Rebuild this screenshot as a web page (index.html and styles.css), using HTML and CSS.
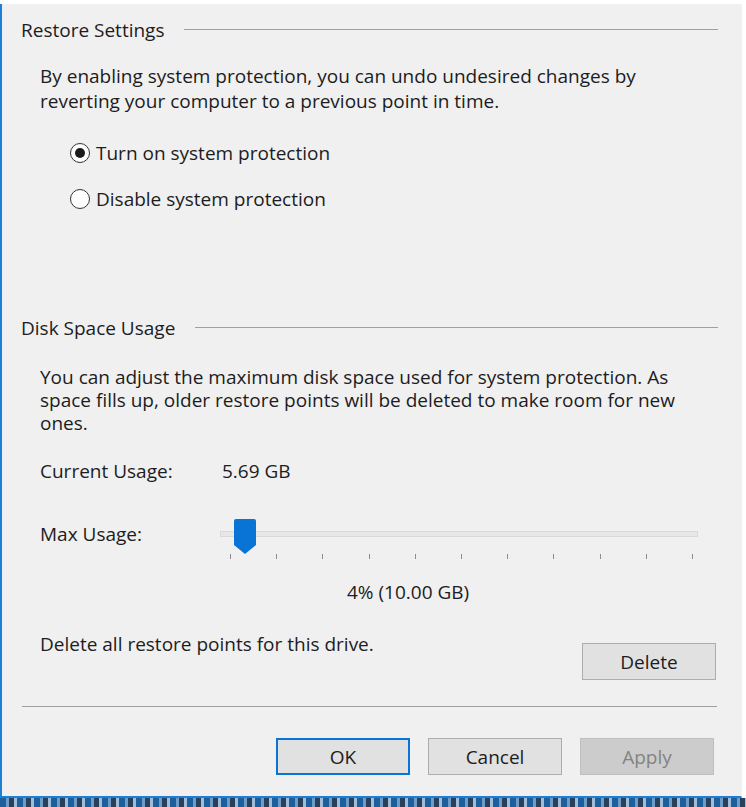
FILE: index.html
```html
<!DOCTYPE html>
<html lang="en">
<head>
    <meta charset="UTF-8">
    <title>System Protection</title>
    <link rel="stylesheet" href="styles.css">
</head>
<body>
    <div class="window">
        <div class="group">
            <div class="group-title"><span>Restore Settings</span></div>
            <p class="note">By enabling system protection, you can undo undesired changes by reverting your computer to a previous point in time.</p>
            <div class="radio-list">
                <label class="radio checked"><span class="dot"></span>Turn on system protection</label>
                <label class="radio"><span class="dot"></span>Disable system protection</label>
            </div>
        </div>

        <div class="group group-disk">
            <div class="group-title"><span>Disk Space Usage</span></div>
            <p class="note note-disk">You can adjust the maximum disk space used for system protection. As space fills up, older restore points will be deleted to make room for new ones.</p>
            <div class="field">
                <span class="field-label">Current Usage:</span>
                <span>5.69 GB</span>
            </div>
            <div class="field field-max">
                <span class="field-label">Max Usage:</span>
                <div class="slider">
                    <div class="track"></div>
                    <svg class="thumb" width="22" height="35" viewBox="0 0 22 35">
                        <path d="M2 0 H20 A2 2 0 0 1 22 2 V26 L11 35 L0 26 V2 A2 2 0 0 1 2 0 Z" fill="#0a74d6"/>
                    </svg>
                    <div class="ticks">
                        <i></i><i></i><i></i><i></i><i></i><i></i><i></i><i></i><i></i><i></i><i></i>
                    </div>
                </div>
            </div>
            <div class="percent">4% (10.00 GB)</div>
            <div class="delete-row">
                <span>Delete all restore points for this drive.</span>
                <button class="btn btn-delete">Delete</button>
            </div>
        </div>

        <hr class="divider">

        <div class="actions">
            <button class="btn btn-default">OK</button>
            <button class="btn">Cancel</button>
            <button class="btn btn-disabled">Apply</button>
        </div>
    </div>
    <div class="taskbar"></div>
</body>
</html>
```

FILE: styles.css
```css
body {
    margin: 0;
    padding: 0;
    background: #ffffff;
    font-family: "Open Sans", "Noto Sans", sans-serif;
    font-size: 19px;
    color: #1c1c22;
    overflow: hidden;
}
.window {
    margin-top: 4px;
    width: 739px;
    height: 792px;
    background: #f0f0f0;
    border-left: 2px solid #1d7fd8;
    border-bottom: 2px solid #1d7fd8;
    border-right: 1px solid #f6eef0;
    position: relative;
}
.group {
    padding: 14px 23px 0 19px;
}
.group-title {
    display: flex;
    align-items: center;
    gap: 20px;
    line-height: 24px;
}
.group-title::after {
    content: "";
    flex: 1;
    height: 1px;
    background: #a0a0a0;
    margin-top: -2px;
}
.note {
    margin: 22px 25px 0 19px;
    line-height: 25px;
}
.note-disk {
    margin-top: 26px;
    line-height: 23px;
}
.radio-list {
    display: flex;
    flex-direction: column;
    gap: 22px;
    margin: 27px 0 0 49px;
}
.radio {
    display: flex;
    align-items: center;
    gap: 6px;
    line-height: 24px;
}
.dot {
    width: 18px;
    height: 18px;
    border: 1px solid #333333;
    border-radius: 50%;
    background: #ffffff;
    position: relative;
}
.radio.checked .dot::after {
    content: "";
    position: absolute;
    left: 4px;
    top: 4px;
    width: 10px;
    height: 10px;
    border-radius: 50%;
    background: #1a1a1a;
}
.group-disk {
    padding-top: 105px;
}
.field {
    display: flex;
    align-items: center;
    margin: 24px 0 0 19px;
    line-height: 24px;
}
.field-label {
    width: 182px;
}
.field-max {
    margin-top: 39px;
    align-items: flex-start;
}
.slider {
    position: relative;
    width: 478px;
    height: 40px;
    margin-left: -2px;
}
.track {
    margin-top: 9px;
    height: 4px;
    background: #e7e7e7;
    border: 1px solid #d9d9d9;
}
.thumb {
    position: absolute;
    left: 14px;
    top: -3px;
}
.ticks {
    display: flex;
    justify-content: space-between;
    padding: 0 5px 0 10px;
    margin-top: 17px;
}
.ticks i {
    width: 1px;
    height: 5px;
    background: #8c8c8c;
}
.percent {
    margin: 18px 0 0 326px;
    line-height: 24px;
}
.delete-row {
    display: flex;
    justify-content: space-between;
    align-items: flex-start;
    margin: 28px 0 0 19px;
    line-height: 24px;
}
.btn {
    font-family: inherit;
    font-size: 19px;
    color: #1c1c22;
    width: 134px;
    height: 37px;
    background: #e1e1e1;
    border: 1px solid #adadad;
    padding: 0;
}
.btn-delete {
    margin: 11px 2px 0 0;
}
.divider {
    margin: 26px 24px 0 20px;
    border: none;
    height: 1px;
    background: #a0a0a0;
}
.actions {
    display: flex;
    justify-content: flex-end;
    gap: 18px;
    margin: 31px 27px 0 0;
}
.btn-default {
    border: 2px solid #0a74d6;
}
.btn-disabled {
    background: #cccccc;
    border-color: #bfbfbf;
    color: #838383;
}
.taskbar {
    height: 9px;
    background: repeating-linear-gradient(90deg, #1d5f9c 0 6px, #6e9cc6 6px 9px, #2a3f5a 9px 14px, #9fbcd8 14px 17px);
}
```
